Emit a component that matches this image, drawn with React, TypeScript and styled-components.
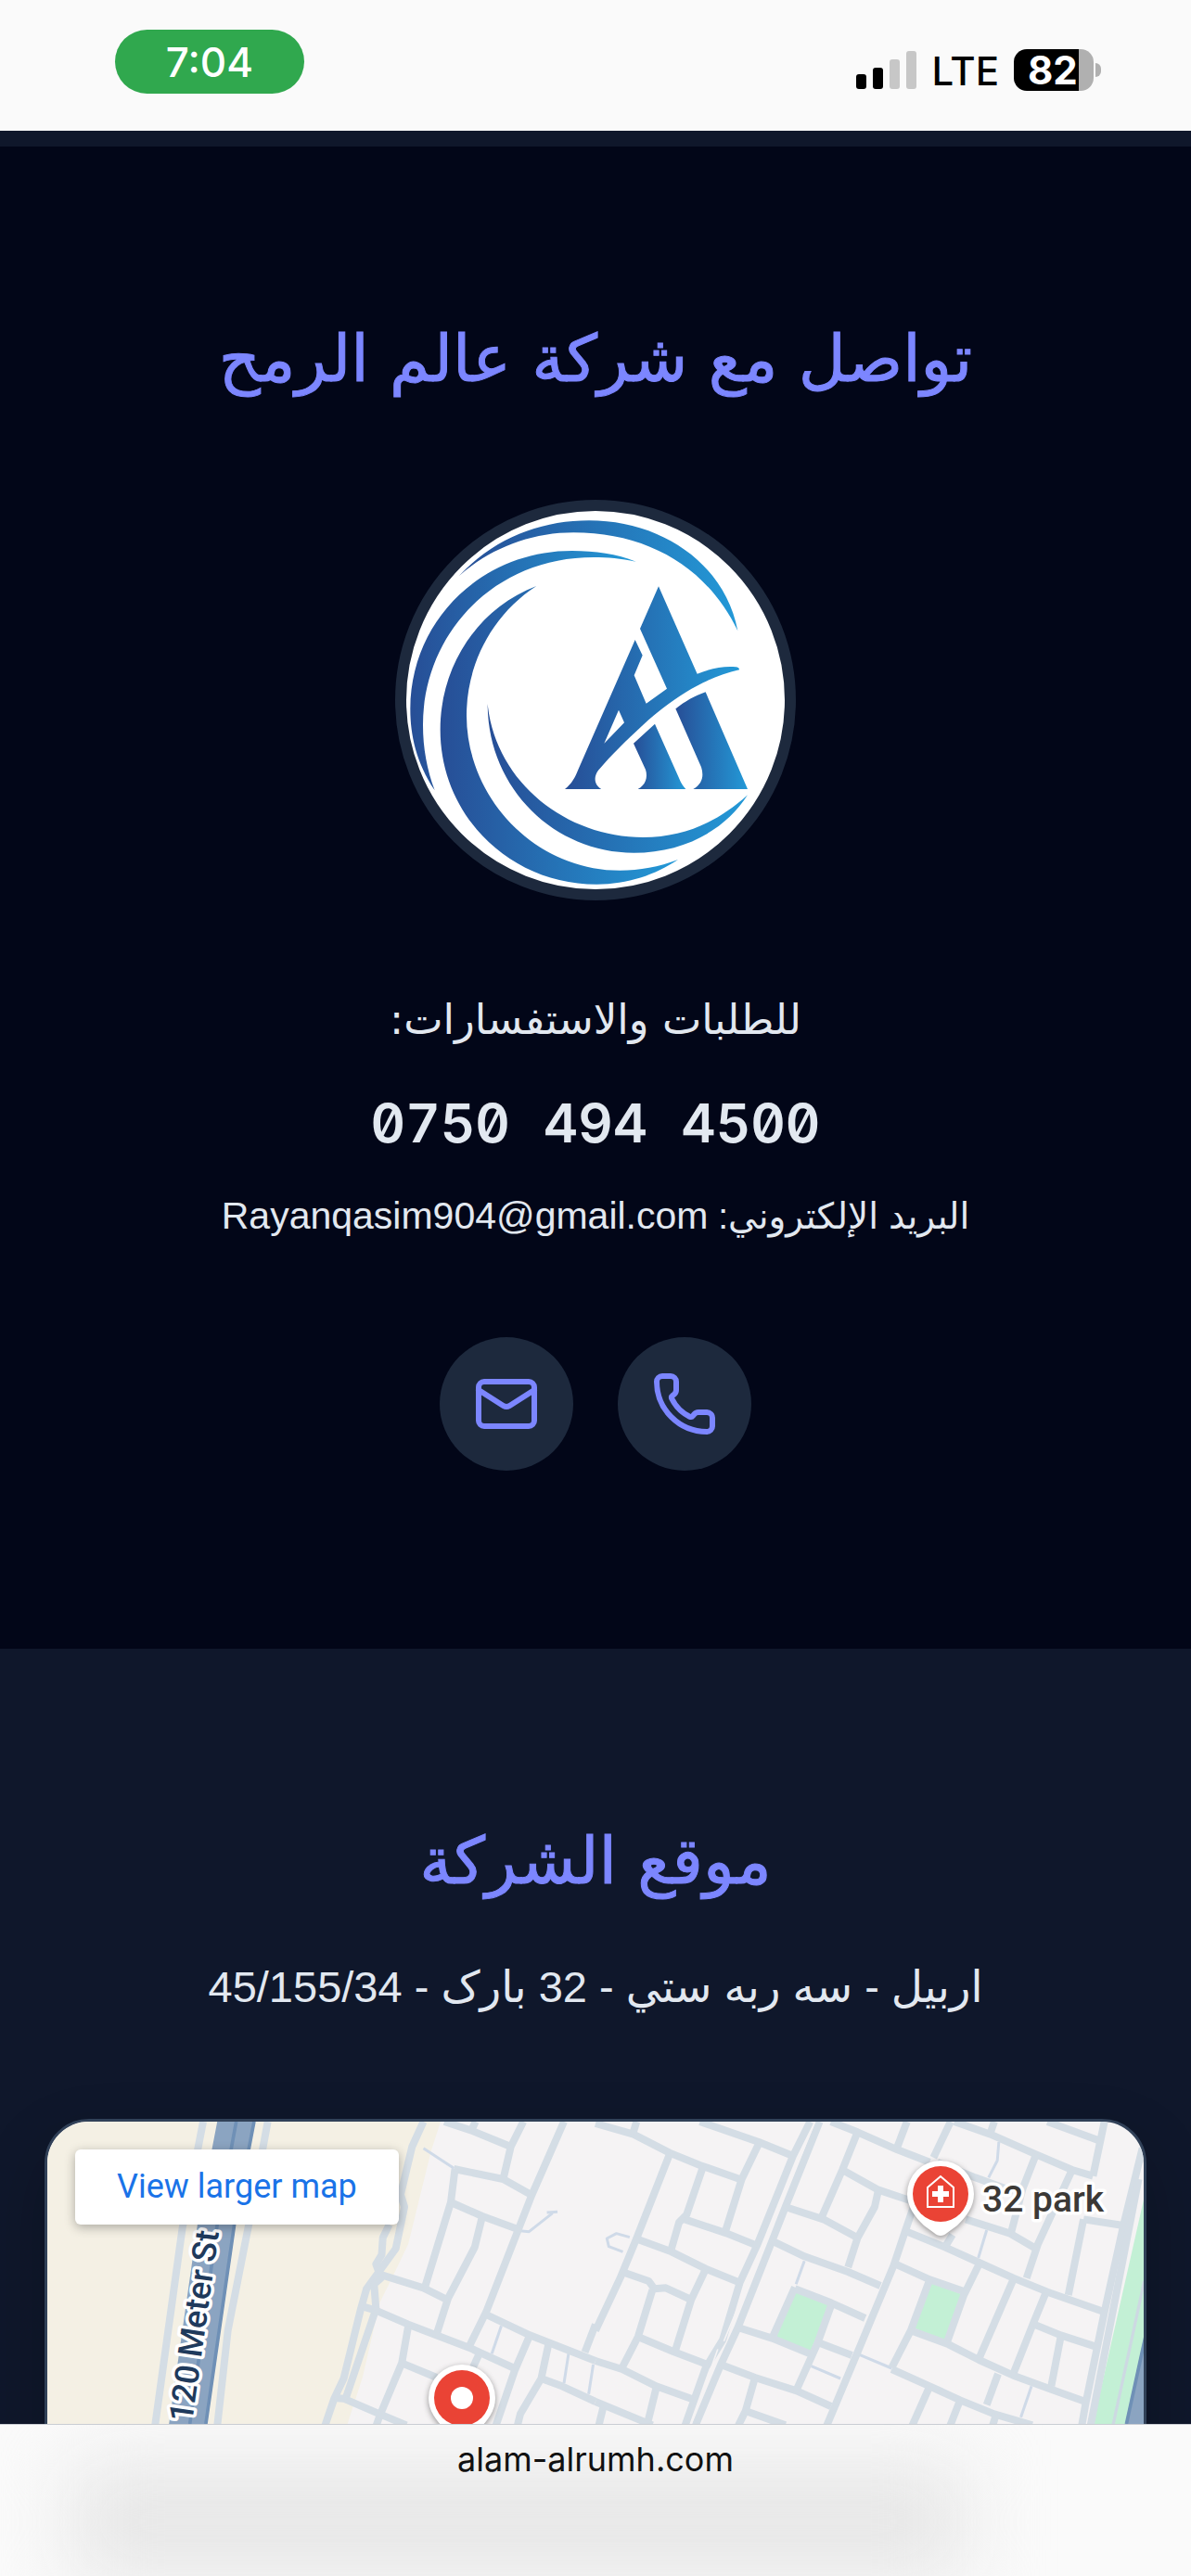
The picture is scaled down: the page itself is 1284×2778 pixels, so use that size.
import React from 'react';
import styled, { createGlobalStyle } from 'styled-components';
import { Mail, Phone } from 'lucide-react';

const GlobalStyle = createGlobalStyle`
  * {
    box-sizing: border-box;
  }

  body {
    margin: 0;
    background-color: #fafafa;
    font-family: 'Liberation Sans', 'DejaVu Sans', sans-serif;
  }
`;

const Screen = styled.div`
  display: flex;
  flex-direction: column;
  height: 100vh;
`;

const StatusBar = styled.header`
  display: flex;
  flex-shrink: 0;
  justify-content: space-between;
  height: 141px;
  padding: 32px 97px 0 124px;
  background-color: #fafafa;
  font-family: Inter, sans-serif;
`;

const TimePill = styled.time`
  display: flex;
  align-items: center;
  justify-content: center;
  width: 204px;
  height: 69px;
  border-radius: 35px;
  background-color: #30a84e;
  color: #fff;
  font-size: 44px;
  font-weight: 500;
`;

const StatusIcons = styled.div`
  display: flex;
  align-items: center;
  gap: 16px;
  height: 45px;
  margin-top: 21px;
`;

const SignalBars = styled.div`
  display: flex;
  align-items: flex-end;
  gap: 7px;
  height: 41px;
`;

const SignalBar = styled.span<{ $height: number; $active?: boolean }>`
  width: 11px;
  height: ${({ $height }) => $height}px;
  border-radius: 3px;
  background-color: ${({ $active }) => ($active ? '#000' : '#c7c7c7')};
`;

const Network = styled.span`
  padding-top: 3px;
  color: #000;
  font-size: 42px;
  font-weight: 500;
  line-height: 52px;
`;

const Battery = styled.div`
  display: flex;
  align-items: center;
  gap: 2px;
`;

const BatteryBody = styled.div`
  display: flex;
  align-items: center;
  width: 86px;
  height: 45px;
  padding-left: 15px;
  border-radius: 14px;
  background: linear-gradient(to right, #000 70px, #b0b0b0 70px);
  color: #fff;
  font-size: 42px;
  font-weight: 700;
`;

const BatteryTip = styled.span`
  width: 6px;
  height: 15px;
  border-radius: 0 6px 6px 0;
  background-color: #b0b0b0;
`;

const Content = styled.main`
  flex: 1;
  min-height: 0;
  overflow: hidden;
  padding-top: 17px;
  background-color: #0f172b;
`;

const Section = styled.section<{ $dark?: boolean }>`
  display: flex;
  flex-direction: column;
  align-items: center;
  padding: 192px 48px;
  background-color: ${({ $dark }) => ($dark ? '#020618' : '#0f172b')};
  color: #e2e8f0;
`;

const Title = styled.h2`
  margin: 0;
  color: #7c86ff;
  font-family: 'DejaVu Sans', sans-serif;
  font-size: 70px;
  font-weight: 400;
  line-height: 75px;
  -webkit-text-stroke: 1px #7c86ff;
`;

const LogoFrame = styled.div`
  width: 432px;
  height: 432px;
  margin-top: 114px;
  border: 12px solid #1d293d;
  border-radius: 50%;
  background-color: #fff;
  overflow: hidden;

  svg {
    display: block;
  }
`;

const Lead = styled.p`
  margin: 96px 0 0;
  font-family: 'DejaVu Sans', sans-serif;
  font-size: 45px;
  line-height: 66px;
`;

const PhoneNumber = styled.a`
  display: flex;
  gap: 36px;
  margin-top: 42px;
  color: inherit;
  font-family: Inter, monospace;
  font-size: 58px;
  font-weight: 600;
  font-feature-settings: 'tnum', 'zero';
  line-height: 72px;
  text-decoration: none;
`;

const Email = styled.p`
  margin: 33px 0 0;
  font-size: 39px;
  line-height: 63px;

  a {
    color: inherit;
    font-size: 41px;
    text-decoration: none;
  }
`;

const Actions = styled.nav`
  display: flex;
  gap: 48px;
  margin-top: 99px;
`;

const RoundLink = styled.a`
  display: flex;
  align-items: center;
  justify-content: center;
  width: 144px;
  height: 144px;
  border-radius: 50%;
  background-color: #1d293d;
  color: #7c86ff;
`;

const Address = styled.p`
  margin: 54px 0 0;
  font-size: 47px;
  line-height: 87px;
`;

const MapCard = styled.div`
  position: relative;
  align-self: stretch;
  height: 900px;
  margin-top: 99px;
  border: 3px solid #314158;
  border-radius: 48px;
  background-color: #f5f3f4;
  box-shadow: 0 30px 72px rgba(0, 0, 0, 0.2);
  overflow: hidden;

  > svg {
    display: block;
    width: 100%;
    height: 100%;
  }
`;

const MapLink = styled.a`
  position: absolute;
  top: 30px;
  left: 30px;
  padding: 0 45px;
  border-radius: 6px;
  background-color: #fff;
  box-shadow: 0 3px 12px rgba(0, 0, 0, 0.3);
  color: #1a73e8;
  font-family: Roboto, sans-serif;
  font-size: 36px;
  line-height: 81px;
  text-decoration: none;
`;

const AddressBar = styled.footer`
  position: relative;
  flex-shrink: 0;
  height: 164px;
  padding-top: 14px;
  border-top: 1px solid #c9cdd3;
  background-color: #fafafa;
  color: #111;
  font-family: Inter, sans-serif;
  font-size: 36px;
  line-height: 46px;
  text-align: center;
  overflow: hidden;

  &::before {
    content: '';
    position: absolute;
    top: 44px;
    left: 6%;
    width: 75%;
    height: 120px;
    background-color: #e6e6e6;
    filter: blur(42px);
  }

  span {
    position: relative;
  }
`;

const Logo = () => (
  <svg width="408" height="408" viewBox="84 93 1224 1224" role="img" aria-label="عالم الرمح">
    <defs>
      <linearGradient id="brand">
        <stop offset="0" stopColor="#274e96" />
        <stop offset="1" stopColor="#2399d7" />
      </linearGradient>
    </defs>
    <g fill="url(#brand)">
      <path d="M255 303C370 180 520 124 675 124c235 0 440 140 481 357C1060 280 870 163 625 163c-140 0-270 52-370 140Z" />
      <path d="M827 257c-50-10-90-14-137-14-325 0-552 250-552 542 0 75 13 145 38 212-60-90-79-180-79-262 0-290 233-513 523-513 75 0 145 10 207 35Z" />
      <path d="M505 336C310 410 194 600 194 800c0 280 226 501 506 501 100 0 190-31 263-80-63 24-123 35-188 35-275 0-496-236-496-501 0-165 81-325 226-419Z" />
      <path d="M347 717c0 270 213 482 473 482 160 0 295-72 368-187-100 90-208 137-338 137-250 0-478-180-503-432Z" />
      <path
        fillRule="evenodd"
        d="M900 337l125 283c45-18 88-26 125-22 8 1 12 5 11 9-101 23-201 78-311 178-60 55-100 95-145 147-17 23-12 48 10 61H597c23-18 33-38 43-63l184-420 24 50-27 65 39 91 67-48-87-194ZM771 737l18 41-65 67Z"
      />
      <path d="M819 845l69-63 77 173c7 17 13 28 23 38H833c25-13 33-38 25-63Z" />
      <path d="M955 733c30-23 60-41 97-54l136 314h-176c30-18 35-43 26-71Z" />
    </g>
  </svg>
);

const westStreets = [
  '1115,84 1085,165 1055,320 1065,360 1042,495 965,625 950,690 905,915 880,980 855,1070',
  '1025,417 1008,460 1005,515 990,545 1003,590 985,610 990,690 910,980',
  '1170,84 1240,112 1345,165',
  '1252,84 1243,108',
  '1378,84 1345,165 1325,270',
  '1485,84 1400,322 1280,700 1235,812',
  '1195,237 1325,270 1400,322',
  '1198,237 1187,345 1120,615',
  '1187,345 1270,390 1370,435',
  '1270,390 1250,490 1180,655 1150,770',
  '1005,580 1115,622 1180,662',
  '955,682 990,695 1075,740 1235,815 1360,885',
  '1075,745 1058,865 1000,1035 990,1070',
  '1058,865 1150,912',
  '880,978 905,980 1000,1030 1070,1066',
  '1260,840 1245,880',
  '1280,708 1395,775 1568,858',
  '1568,740 1540,830',
  '1395,775 1355,890 1305,1070',
  '1445,800 1425,915 1370,1030 1362,1070',
  '1425,915 1480,940 1568,990',
  '535,84 480,430 408,1070',
  '705,84 655,417 600,760 572,1070',
];

const westLanes = [
  '1320,745 1295,835',
  '1497,835 1485,930',
  '1562,870 1550,965',
  '1115,170 1195,235',
  '1370,437 1393,440 1455,380',
  '1440,378 1468,376',
];

const eastStreets = [
  '0,90 100,125 195,185 275,225 380,270',
  '108,84 98,125',
  '275,84 430,150 520,195',
  '565,84 520,195 425,485 380,605 335,790 290,880 235,1070',
  '590,84 500,360 465,470 375,750 330,870 262,1070',
  '195,190 108,462 65,590 0,760',
  '283,230 240,385 220,410 200,495',
  '430,155 385,270 343,435',
  '235,400 345,445 425,485',
  '105,462 200,505 290,560 380,605',
  '70,570 140,600 155,625 185,622 252,660',
  '290,562 252,660 210,825',
  '150,628 112,780 68,885',
  '112,780 205,828 295,870',
  '0,858 70,885 160,940 262,985',
  '160,945 135,1070',
  '0,990 150,1066',
  '20,1010 8,1070',
  '620,84 690,118 795,175 880,215',
  '690,118 650,240 595,395',
  '820,84 795,165',
  '935,84 890,200',
  '945,84 1040,125 1160,190 1255,240 1310,260',
  '1050,84 1040,120',
  '1190,84 1325,145',
  '1340,84 1310,260',
  '1285,400 1245,645',
  '1160,190 1125,300 1095,440',
  '1255,240 1165,480 1135,590',
  '650,240 745,305 830,340',
  '745,305 735,360 690,460 665,555',
  '500,360 600,400 690,460',
  '465,470 550,520 665,570 750,615',
  '840,350 815,440 785,550 690,830 608,1070',
  '820,440 920,490 1010,540 1100,590 1190,635 1340,700',
  '900,215 1000,265 1100,310',
  '975,400 1090,445 1160,495',
  '940,450 920,490',
  '790,545 880,595 975,635',
  '880,595 830,760 780,880',
  '1010,545 970,645 925,800',
  '1100,595 1010,850',
  '1185,640 1150,745 1100,900',
  '1155,740 1225,775 1325,815',
  '1225,780 1200,940',
  '830,760 930,805 1010,855 1100,905 1200,950 1290,990',
  '1285,400 1390,420',
  '525,625 620,670 710,720',
  '525,620 465,785',
  '375,750 465,785 565,835',
  '620,680 585,800 530,950',
  '590,800 675,840',
  '330,870 420,912 530,955 620,1005',
  '420,912 395,1020 375,1070',
  '395,1020 500,1066',
  '780,885 880,940 960,985 1050,1030 1150,1066',
  '880,940 833,1070',
  '960,985 933,1070',
  '1060,900 1030,1000',
  '1055,1030 1045,1070',
  '1440,170 1390,420 1340,700 1290,1000 1280,1070',
  '1430,270 1365,680 1303,1070',
];

const eastLanes = [
  '1062,150 1058,210 1035,265',
  '1030,435 1008,525',
  '550,535 528,610',
  '695,838 780,882',
  '568,875 645,915',
  '1148,940 1120,1040',
  '90,458 55,446 30,462 35,488 72,505',
];

const Line = styled.polyline<{ $thin?: boolean }>`
  fill: none;
  stroke: ${({ $thin }) => ($thin ? '#cfdae8' : '#d4dde5')};
  stroke-width: ${({ $thin }) => ($thin ? 3 : 8)}px;
  stroke-linejoin: round;
  vector-effect: non-scaling-stroke;
`;

const MapLabel = styled.text<{ $street?: boolean }>`
  fill: ${({ $street }) => ($street ? '#1f3a5c' : '#3c3936')};
  font-family: Roboto, sans-serif;
  font-size: ${({ $street }) => ($street ? 36 : 39)}px;
  font-weight: 500;
  paint-order: stroke;
  stroke: #fff;
  stroke-width: 7px;
  stroke-linejoin: round;
`;

const Pin = styled.g`
  filter: drop-shadow(0 2px 3px rgba(0, 0, 0, 0.4));
`;

const StreetMap = () => (
  <svg viewBox="0 0 1182 894" preserveAspectRatio="xMidYMin slice" aria-hidden="true">
    <g transform="translate(-51 -28) scale(.40944 .33333)">
      <path fill="#f4f0e4" d="M0 0h1175l-15 84-25 96-60 300-35 90-40 100-45 240-40 152-60 400-900 1200Z" />
      <path fill="#8ba4c1" d="M572 84h100l-52 333-75 645-10 80H435l10-80 75-645Z" />
      <path fill="none" stroke="#6f90b6" strokeWidth="9" d="M622 84l-50 333-72 645M669 84l-52 333-75 645" />
      {westLanes.map((points) => <Line key={points} points={points} $thin />)}
      {westStreets.map((points) => <Line key={points} points={points} />)}
    </g>
    <g transform="translate(591 -28) scale(.40944 .33333)">
      <path fill="#c3f0d5" d="M525 632l90 46-50 154-93-44ZM885 607l85 38-45 150-90-45ZM1450 300l-140 762-20 140h180Z" />
      <path fill="#8ba4c1" d="M1450 750l-55 312-20 120h90Z" />
      <path fill="none" stroke="#6f90b6" strokeWidth="9" d="M1448 780l-50 282" />
      {eastLanes.map((points) => <Line key={points} points={points} $thin />)}
      {eastStreets.map((points) => <Line key={points} points={points} />)}
      <path fill="none" stroke="#cdd9e2" strokeWidth="8" d="M1445 600l-83 470" />
      <path fill="none" stroke="#f5f3f4" strokeWidth="4" d="M578 84l-240 710M322 820l-72 250" />
    </g>
    <MapLabel $street transform="translate(156 325) rotate(-82)">120 Meter St</MapLabel>
    <Pin>
      <path fill="#fff" d="M963 42a36 36 0 0 1 36 36c0 14-8 24-18 34l-11 8c-4 4-10 4-14 0l-11-8c-10-10-18-20-18-34a36 36 0 0 1 36-36Z" />
      <circle cx="963" cy="78" r="30" fill="#ea4335" />
      <path fill="none" stroke="#fff" strokeWidth="2" d="M949 92V71l14-12 14 12v21Z" />
      <path fill="#fff" d="M960 69h6v6h6v6h-6v6h-6v-6h-6v-6h6Z" />
    </Pin>
    <MapLabel x="1008" y="97">32 park</MapLabel>
    <Pin>
      <path fill="#fff" d="M447 262a36 36 0 0 1 36 36c0 14-8 24-18 34l-18 12-18-12c-10-10-18-20-18-34a36 36 0 0 1 36-36Z" />
      <circle cx="447" cy="298" r="30" fill="#ea4335" />
      <circle cx="447" cy="298" r="12" fill="#fff" />
    </Pin>
  </svg>
);

const App: React.FC = () => {
  return (
    <>
      <GlobalStyle />
      <Screen>
        <StatusBar>
          <TimePill>7:04</TimePill>
          <StatusIcons>
            <SignalBars>
              <SignalBar $height={16} $active />
              <SignalBar $height={23} $active />
              <SignalBar $height={32} />
              <SignalBar $height={41} />
            </SignalBars>
            <Network>LTE</Network>
            <Battery>
              <BatteryBody>82</BatteryBody>
              <BatteryTip />
            </Battery>
          </StatusIcons>
        </StatusBar>

        <Content dir="rtl" lang="ar">
          <Section $dark>
            <Title>تواصل مع شركة عالم الرمح</Title>
            <LogoFrame>
              <Logo />
            </LogoFrame>
            <Lead>للطلبات والاستفسارات:</Lead>
            <PhoneNumber href="tel:07504944500" dir="ltr">
              <span>0750</span> <span>494</span> <span>4500</span>
            </PhoneNumber>
            <Email>
              البريد الإلكتروني: <a href="mailto:Rayanqasim904@gmail.com">Rayanqasim904@gmail.com</a>
            </Email>
            <Actions>
              <RoundLink href="tel:07504944500" aria-label="اتصال">
                <Phone size={72} />
              </RoundLink>
              <RoundLink href="mailto:Rayanqasim904@gmail.com" aria-label="البريد الإلكتروني">
                <Mail size={72} />
              </RoundLink>
            </Actions>
          </Section>

          <Section>
            <Title>موقع الشركة</Title>
            <Address>اربيل - سه ربه ستي - 32 بارک - 45/155/34</Address>
            <MapCard dir="ltr">
              <StreetMap />
              <MapLink href="#map">View larger map</MapLink>
            </MapCard>
          </Section>
        </Content>

        <AddressBar>
          <span>alam-alrumh.com</span>
        </AddressBar>
      </Screen>
    </>
  );
};

export default App;
